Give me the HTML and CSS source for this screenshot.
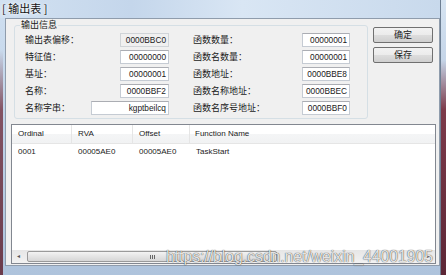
FILE: index.html
```html
<!DOCTYPE html>
<html lang="zh-CN">
<head>
  <meta charset="UTF-8">
  <title>输出表</title>
  <link rel="stylesheet" href="styles.css">
</head>
<body>
  <div class="window">
    <!-- Title bar -->
    <div class="titlebar"><span class="title">[ 输出表 ]</span></div>

    <div class="client">
      <div class="top">
        <!-- Export info group -->
        <fieldset class="group">
          <legend>输出信息</legend>
          <div class="fields">
            <span class="lbl">输出表偏移：</span><span class="box ro">0000BBC0</span>
            <span class="lbl">函数数量：</span><span class="box">00000001</span>

            <span class="lbl">特征值：</span><span class="box">00000000</span>
            <span class="lbl">函数名数量：</span><span class="box">00000001</span>

            <span class="lbl">基址：</span><span class="box">00000001</span>
            <span class="lbl">函数地址：</span><span class="box">0000BBE8</span>

            <span class="lbl">名称：</span><span class="box">0000BBF2</span>
            <span class="lbl">函数名称地址：</span><span class="box">0000BBEC</span>

            <span class="lbl">名称字串：</span><span class="box wide">kgptbeilcq</span>
            <span class="lbl">函数名序号地址：</span><span class="box">0000BBF0</span>
          </div>
        </fieldset>

        <div class="buttons">
          <button class="btn">确定</button>
          <button class="btn">保存</button>
        </div>
      </div>

      <!-- Function list -->
      <div class="list">
        <div class="head">
          <span class="col c1">Ordinal</span>
          <span class="col c2">RVA</span>
          <span class="col c3">Offset</span>
          <span class="col c4">Function Name</span>
        </div>
        <div class="rows">
          <div class="row">
            <span class="cell c1">0001</span>
            <span class="cell c2">00005AE0</span>
            <span class="cell c3">00005AE0</span>
            <span class="cell c4">TaskStart</span>
          </div>
        </div>
        <div class="hscroll">
          <span class="arrow">&#9666;</span>
          <div class="track"><div class="thumb"><span class="grip"></span></div></div>
          <span class="arrow">&#9656;</span>
        </div>
        <div class="watermark">https://blog.csdn.net/weixin_44001905</div>
      </div>
    </div>
  </div>
</body>
</html>
```

FILE: styles.css
```css
/* Page + desktop behind the window */
body {
  margin: 0;
  width: 446px;
  height: 275px;
  overflow: hidden;
  background: linear-gradient(to bottom, #d6e4f2 0, #c5d5e8 60px, #7c3a4a 110px, #5c2636 100%);
  font-family: "Noto Sans CJK SC", sans-serif;
}

/* Window frame (Aero glass) */
.window {
  width: 441px;
  height: 275px;
  display: flex;
  flex-direction: column;
  background:
    linear-gradient(to bottom, transparent 50px, rgba(120, 60, 75, 0.85) 110px, rgba(100, 45, 60, 0.9) 100%) left top / 3px 100% no-repeat,
    linear-gradient(to bottom, #cfdff0 0, #c2d5ea 40%, #aec3dc 100%);
  border-right: 1px solid #6d7f93;
  box-sizing: border-box;
}
.titlebar {
  height: 18px;
  flex: none;
  padding-left: 2px;
  overflow: hidden;
  background: linear-gradient(to right, #d2e1f1 0, #c4d6eb 30%, #d9e6f4 55%, #c8d9ec 100%);
}
.title {
  display: block;
  font-size: 11px;
  line-height: 16px;
  color: #141414;
  text-shadow: 0 0 4px #fff, 0 0 2px #fff;
}

/* Client area */
.client {
  width: 435px;
  height: 248px;
  margin-left: 5px;
  box-sizing: border-box;
  border: 1px solid #8f9cac;
  background: #f0f0f0;
  display: flex;
  flex-direction: column;
}
.top {
  display: flex;
  flex: none;
}

/* Group box */
.group {
  width: 354px;
  box-sizing: border-box;
  margin: 0 0 0 8px;
  padding: 0 0 3px 0;
  border: 1px solid #d5dfe5;
  border-radius: 3px;
}
.group legend {
  margin-left: 5px;
  padding: 0 1px;
  font-size: 9px;
  line-height: 12px;
  color: #1a1a1a;
}
.fields {
  display: grid;
  grid-template-columns: 95px 49px 133px 48px;
  grid-auto-rows: 14px;
  row-gap: 3px;
  margin: 2px 0 0 10px;
}
.fields .lbl:nth-child(4n+3) {
  margin-left: 24px;
}
.lbl {
  font-size: 9px;
  line-height: 14px;
  color: #1a1a1a;
  white-space: nowrap;
}
.box {
  box-sizing: border-box;
  height: 14px;
  border: 1px solid #c5cbd3;
  border-top-color: #abadb3;
  background: #fff;
  font-family: "Liberation Sans", sans-serif;
  font-size: 8.3px;
  line-height: 12px;
  text-align: right;
  padding-right: 2px;
  color: #1a1a1a;
}
.box.ro {
  background: #f0f0f0;
  border-color: #d0d4d8;
}
.box.wide {
  width: 78px;
  justify-self: end;
}

/* Buttons */
.buttons {
  display: flex;
  flex-direction: column;
  gap: 4px;
  margin: 8px 0 0 5px;
}
.btn {
  width: 60px;
  height: 16px;
  padding: 0;
  border: 1px solid #707070;
  border-radius: 2px;
  background: linear-gradient(to bottom, #f2f2f2 0, #ebebeb 50%, #dddddd 51%, #cfcfcf 100%);
  font-family: "Noto Sans CJK SC", sans-serif;
  font-size: 9px;
  line-height: 14px;
  color: #1a1a1a;
}

/* List view */
.list {
  position: relative;
  flex: 1;
  margin: 5px 3px 1px 5px;
  border: 1px solid #828790;
  background: #fff;
  display: flex;
  flex-direction: column;
  font-family: "Liberation Sans", sans-serif;
  font-size: 8px;
  color: #1a1a1a;
}
.head {
  height: 19px;
  flex: none;
  display: flex;
  box-sizing: border-box;
  border-bottom: 1px solid #e5e5e5;
  background: linear-gradient(to bottom, #ffffff 0, #ffffff 50%, #f4f5f6 51%, #f1f2f3 100%);
}
.col {
  box-sizing: border-box;
  padding-left: 6px;
  line-height: 18px;
  border-right: 1px solid #e5e5e5;
}
.c1 { width: 60px; }
.c2 { width: 61px; }
.c3 { width: 57px; }
.c4 { flex: 1; border-right: 0; }
.col.c4 { padding-left: 5px; }
.rows {
  flex: 1;
}
.row {
  display: flex;
  height: 16px;
  line-height: 16px;
}
.cell {
  box-sizing: border-box;
  padding-left: 6px;
}

/* Horizontal scrollbar */
.hscroll {
  height: 13px;
  flex: none;
  display: flex;
  background: linear-gradient(to bottom, #e6e6e6 0, #f2f2f2 100%);
}
.arrow {
  width: 13px;
  font-size: 6px;
  line-height: 13px;
  text-align: center;
  color: #555;
}
.track {
  flex: 1;
  padding: 1px 2px;
}
.thumb {
  width: 250px;
  height: 11px;
  box-sizing: border-box;
  border: 1px solid #9a9a9a;
  border-radius: 2px;
  background: linear-gradient(to bottom, #f3f3f3 0, #e4e4e4 50%, #d6d6d6 100%);
  display: flex;
  justify-content: center;
  align-items: center;
}
.grip {
  width: 5px;
  height: 4px;
  border-left: 1px solid #666;
  border-right: 1px solid #666;
  box-sizing: border-box;
  background: linear-gradient(to right, transparent 1px, #666 1px, #666 2px, transparent 2px);
}

/* Blog watermark over the scrollbar */
.watermark {
  position: absolute;
  left: 154px;
  bottom: -2px;
  font-family: "Liberation Sans", sans-serif;
  font-size: 15.7px;
  line-height: 17px;
  color: rgba(250, 250, 250, 0.9);
  text-shadow: 0 0 1px rgba(0, 0, 0, 0.7), 0 0 1px rgba(0, 0, 0, 0.4);
  white-space: nowrap;
}
```
